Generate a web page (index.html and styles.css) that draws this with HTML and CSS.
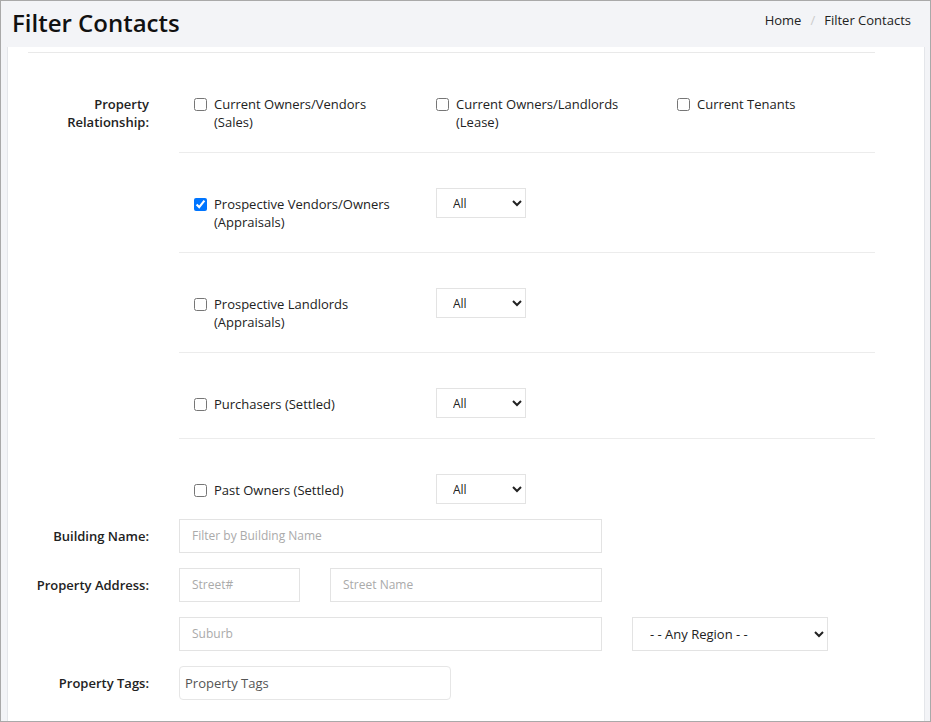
FILE: index.html
```html
<!DOCTYPE html>
<html lang="en">
<head>
    <meta charset="UTF-8">
    <meta name="viewport" content="width=device-width, initial-scale=1.0">
    <title>Filter Contacts</title>
    <link rel="stylesheet" href="styles.css">
</head>
<body>
    <header class="page-header">
        <h1>Filter Contacts</h1>
        <ol class="breadcrumb">
            <li><a href="#">Home</a></li>
            <li class="sep">/</li>
            <li>Filter Contacts</li>
        </ol>
    </header>
    <div class="panel">
        <hr class="top-rule">
        <form class="filter-form">
            <div class="form-group relationship">
                <label class="control-label">Property Relationship:</label>
                <div class="rel-rows">
                    <div class="rel-row">
                        <label class="check"><input type="checkbox"><span>Current Owners/Vendors (Sales)</span></label>
                        <label class="check"><input type="checkbox"><span>Current Owners/Landlords (Lease)</span></label>
                        <label class="check"><input type="checkbox"><span>Current Tenants</span></label>
                    </div>
                    <div class="rel-row">
                        <label class="check"><input type="checkbox" checked><span>Prospective Vendors/Owners (Appraisals)</span></label>
                        <div class="rel-select">
                            <select class="small-select"><option>All</option></select>
                        </div>
                    </div>
                    <div class="rel-row">
                        <label class="check"><input type="checkbox"><span>Prospective Landlords (Appraisals)</span></label>
                        <div class="rel-select">
                            <select class="small-select"><option>All</option></select>
                        </div>
                    </div>
                    <div class="rel-row">
                        <label class="check"><input type="checkbox"><span>Purchasers (Settled)</span></label>
                        <div class="rel-select">
                            <select class="small-select"><option>All</option></select>
                        </div>
                    </div>
                    <div class="rel-row">
                        <label class="check"><input type="checkbox"><span>Past Owners (Settled)</span></label>
                        <div class="rel-select">
                            <select class="small-select"><option>All</option></select>
                        </div>
                    </div>
                </div>
            </div>

            <div class="form-group">
                <label class="control-label">Building Name:</label>
                <div class="controls">
                    <input type="text" class="text-input w-full" placeholder="Filter by Building Name">
                </div>
            </div>

            <div class="form-group address-group">
                <label class="control-label">Property Address:</label>
                <div class="controls address">
                    <div class="address-row">
                        <input type="text" class="text-input w-street-no" placeholder="Street#">
                        <input type="text" class="text-input w-street" placeholder="Street Name">
                    </div>
                    <div class="address-row">
                        <input type="text" class="text-input w-full" placeholder="Suburb">
                        <select class="region-select"><option>- - Any Region - -</option></select>
                    </div>
                </div>
            </div>

            <div class="form-group">
                <label class="control-label">Property Tags:</label>
                <div class="controls">
                    <input type="text" class="tags-input" value="Property Tags">
                </div>
            </div>
        </form>
    </div>
</body>
</html>
```

FILE: styles.css
```css
html, body {
    height: 100%;
}
body {
    font-family: "Open Sans", Arial, sans-serif;
    font-size: 13px;
    color: #333;
    margin: 0;
    background-color: #f3f4f7;
    border: 1px solid #a9a9a9;
    box-sizing: border-box;
    display: flex;
    flex-direction: column;
    overflow: hidden;
}
.page-header {
    height: 45px;
    padding: 0 19px 3px 11px;
    box-sizing: border-box;
    display: flex;
    align-items: center;
    justify-content: space-between;
    flex-shrink: 0;
}
.page-header h1 {
    margin: 0;
    font-size: 24px;
    font-weight: 600;
    color: #111;
}
.breadcrumb {
    list-style: none;
    margin: 0;
    padding: 0 0 4px;
    display: flex;
    gap: 9px;
    color: #222;
}
.breadcrumb a {
    color: #222;
    text-decoration: none;
}
.breadcrumb .sep {
    color: #ccc;
}
.panel {
    flex: 1;
    margin: 1px 5px 0 6px;
    padding: 5px 49px 0 20px;
    background-color: white;
    border-left: 1px solid #e4e6ea;
    border-right: 1px solid #e4e6ea;
}
.top-rule {
    margin: 0;
    border: 0;
    border-top: 1px solid #e9e9e9;
}
.form-group {
    display: grid;
    grid-template-columns: 121px 1fr;
    column-gap: 30px;
    margin-bottom: 15px;
    align-items: center;
}
.control-label {
    font-weight: 600;
    text-align: right;
    color: #222;
}
.relationship {
    align-items: start;
}
.relationship .control-label {
    padding-top: 42px;
    line-height: 18px;
}
.address-group {
    align-items: start;
}
.address-group .control-label {
    line-height: 34px;
}
.rel-row {
    display: grid;
    grid-template-columns: 242px 241px 1fr;
    align-items: start;
    padding: 35px 0 20px;
    border-top: 1px solid #ececec;
}
.rel-row:first-child {
    border-top: none;
}
.rel-row:last-child {
    padding-bottom: 0;
}
.check {
    display: flex;
    align-items: flex-start;
    gap: 7px;
    padding: 7px 15px 1px;
    line-height: 18px;
    color: #222;
}
.check input {
    margin: 3px 0 0;
    width: 13px;
    height: 13px;
    flex-shrink: 0;
}
.rel-select {
    padding-left: 15px;
}
.small-select {
    width: 90px;
    height: 30px;
    padding: 0 5px 0 12px;
    font-family: "Open Sans", Arial, sans-serif;
    font-size: 12px;
    color: #222;
    background-color: white;
    border: 1px solid #e3e3e3;
    border-radius: 0;
}
.controls.address {
    display: flex;
    flex-direction: column;
    gap: 15px;
}
.address-row {
    display: flex;
    gap: 30px;
}
.text-input {
    height: 34px;
    box-sizing: border-box;
    padding: 0 12px 1px;
    font-family: "Open Sans", Arial, sans-serif;
    font-size: 12px;
    color: #333;
    border: 1px solid #e3e3e3;
    border-radius: 0;
    display: block;
}
.text-input::placeholder {
    color: #aaa;
}
.w-full {
    width: 423px;
}
.w-street-no {
    width: 121px;
}
.w-street {
    width: 272px;
}
.region-select {
    width: 196px;
    height: 34px;
    padding: 0 5px 0 13px;
    font-family: "Open Sans", Arial, sans-serif;
    font-size: 13px;
    color: #222;
    background-color: white;
    border: 1px solid #e3e3e3;
    border-radius: 0;
}
.tags-input {
    width: 272px;
    height: 34px;
    box-sizing: border-box;
    padding: 0 5px;
    font-family: "Open Sans", Arial, sans-serif;
    font-size: 13px;
    color: #555;
    border: 1px solid #e6e6e6;
    border-radius: 4px;
    display: block;
}
```
